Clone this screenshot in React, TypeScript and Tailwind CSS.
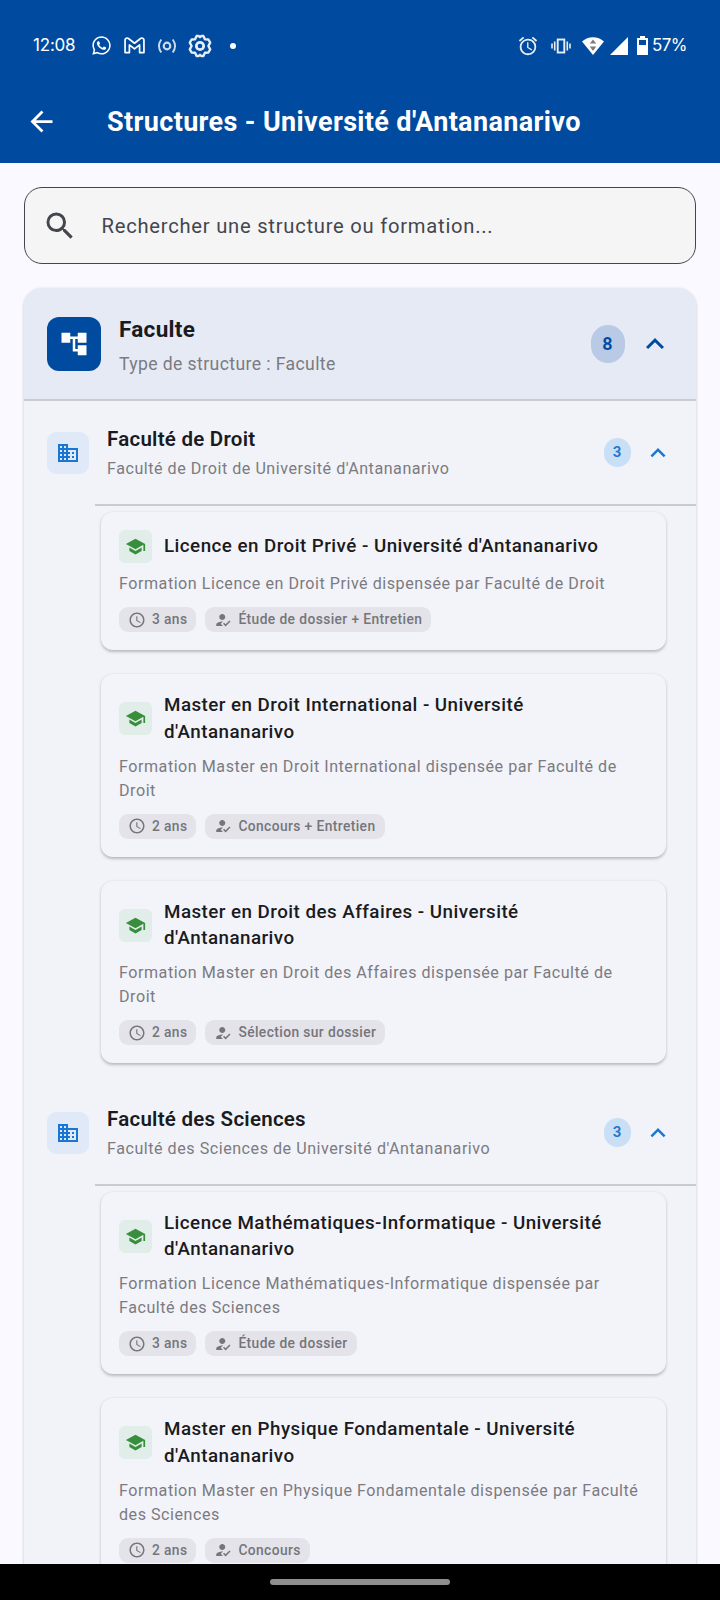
import {
  MdAccountTree,
  MdAlarm,
  MdArrowBack,
  MdBusiness,
  MdExpandLess,
  MdHowToReg,
  MdSchedule,
  MdSchool,
  MdSearch,
} from "react-icons/md";
import { FaWhatsapp } from "react-icons/fa";

type Formation = {
  title: string;
  description: string;
  duration: string;
  admission: string;
};

type Structure = {
  name: string;
  description: string;
  formations: Formation[];
};

const structures: Structure[] = [
  {
    name: "Faculté de Droit",
    description: "Faculté de Droit de Université d'Antananarivo",
    formations: [
      {
        title: "Licence en Droit Privé - Université d'Antananarivo",
        description:
          "Formation Licence en Droit Privé dispensée par Faculté de Droit",
        duration: "3 ans",
        admission: "Étude de dossier + Entretien",
      },
      {
        title: "Master en Droit International - Université d'Antananarivo",
        description:
          "Formation Master en Droit International dispensée par Faculté de Droit",
        duration: "2 ans",
        admission: "Concours + Entretien",
      },
      {
        title: "Master en Droit des Affaires - Université d'Antananarivo",
        description:
          "Formation Master en Droit des Affaires dispensée par Faculté de Droit",
        duration: "2 ans",
        admission: "Sélection sur dossier",
      },
    ],
  },
  {
    name: "Faculté des Sciences",
    description: "Faculté des Sciences de Université d'Antananarivo",
    formations: [
      {
        title: "Licence Mathématiques-Informatique - Université d'Antananarivo",
        description:
          "Formation Licence Mathématiques-Informatique dispensée par Faculté des Sciences",
        duration: "3 ans",
        admission: "Étude de dossier",
      },
      {
        title: "Master en Physique Fondamentale - Université d'Antananarivo",
        description:
          "Formation Master en Physique Fondamentale dispensée par Faculté des Sciences",
        duration: "2 ans",
        admission: "Concours",
      },
    ],
  },
];

function StatusBar() {
  return (
    <div className="flex h-[91px] items-center justify-between pl-[33px] pr-[33px] text-white font-['Inter',sans-serif]">
      <div className="flex items-center">
        <span className="w-[58px] text-[17px] tracking-[-0.2px]">12:08</span>
        <FaWhatsapp className="size-[21px]" />
        {/* Gmail */}
        <svg viewBox="0 0 22 18" className="ml-3 h-[17px] w-[21px]" fill="none" stroke="currentColor" strokeWidth="1.8" strokeLinejoin="round">
          <path d="M1 16.5V3.2C1 1.2 3.2.5 4.6 1.6L11 6.6l6.4-5C18.8.5 21 1.2 21 3.2v13.3h-4.6V8.4L11 12.6 5.6 8.4v8.1z" />
        </svg>
        {/* Hotspot */}
        <svg viewBox="0 0 20 16" className="ml-3 h-4 w-5 opacity-80" fill="none" stroke="currentColor" strokeWidth="1.9">
          <circle cx="10" cy="8" r="3.3" strokeWidth="2.2" />
          <path d="M4.3 1.5Q-.4 8 4.3 14.5M15.7 1.5Q20.4 8 15.7 14.5" />
        </svg>
        {/* Settings */}
        <svg viewBox="0 0 24 24" className="ml-[11px] size-6 opacity-90" fill="none" stroke="currentColor" strokeWidth="2.4" strokeLinejoin="round">
          <path d="M8.6 2h2.2L12 3.2 13.200 2h2.200l1.500 3.200 3.500.300 1.800 3.100L20.400 12l1.800 3.400-1.800 3.100-3.500.300L15.400 22h-2.200L12 20.800 10.800 22H8.600l-1.500-3.200-3.500-.300-1.800-3.100L3.600 12 1.800 8.600l1.800-3.100 3.500-.300z" />
          <circle cx="12" cy="12" r="3.7" strokeWidth="2.8" />
        </svg>
        <span className="ml-[18px] size-1.5 rounded-full bg-white" />
      </div>
      <div className="flex items-center">
        <MdAlarm className="size-[22px] opacity-90" />
        {/* Vibrate */}
        <svg viewBox="0 0 20 16" className="ml-3 h-4 w-5 opacity-90" fill="none" stroke="currentColor">
          <rect x="6.7" y="1.5" width="6.600" height="13" strokeWidth="1.900" />
          <path d="M3.700 3.500v9M16.300 3.500v9M1 5.500v5M19 5.500v5" strokeWidth="1.600" />
        </svg>
        <svg viewBox="0 0 22 18" className="ml-[11px] h-[18px] w-[22px]">
          <path fill="#fff" d="M0 4.500C6-1.200 16-1.200 22 4.500L11 18z" />
          <path fill="#7b7b7b" d="M11 2.500 14.200 6.500H7.800zM11 14 7.800 9.500h6.400z" />
        </svg>
        <svg viewBox="0 0 18 18" className="ml-[6px] size-[18px]">
          <path fill="#fff" d="M18 0v18H0z" />
        </svg>
        <svg viewBox="0 0 11 19" className="ml-[9px] h-[19px] w-[11px]">
          <path fill="#fff" fillRule="evenodd" d="M3 0h5v2h3v17H0V2h3zM2 4v5h7V4z" />
        </svg>
        <span className="ml-1 w-[35px] whitespace-nowrap text-[17px] tracking-[-0.6px]">57%</span>
      </div>
    </div>
  );
}

function AppBar() {
  return (
    <div className="flex h-[72px] items-center pb-[11px] pl-[25px] text-white">
      <MdArrowBack className="size-[33px] shrink-0" />
      <h1 className="ml-[49px] whitespace-nowrap text-[27px] font-bold leading-8 tracking-[0.36px]">
        Structures - Université d'Antananarivo
      </h1>
    </div>
  );
}

function SearchField() {
  return (
    <div className="mx-6 mt-6 flex h-[77px] items-center rounded-[18px] border-[1.5px] border-[#44464f] bg-[#f5f5f5] pl-[17px] text-[#44464f]">
      <MdSearch className="size-9" />
      <span className="ml-[23.5px] pt-0.5 text-[20.2px] tracking-[0.75px]">
        Rechercher une structure ou formation...
      </span>
    </div>
  );
}

function FormationCard({ formation }: { formation: Formation }) {
  return (
    <article className="rounded-xl bg-[#f3f3fa] p-[18px] shadow-[0_1.5px_3px_rgba(0,0,0,0.24)]">
      <div className="flex items-center gap-3">
        <div className="flex size-[33px] shrink-0 items-center justify-center rounded-md bg-[#e1ede8]">
          <MdSchool className="size-[21px] text-[#388e3c]" />
        </div>
        <h3 className="text-[18.8px] font-[550] leading-[26.6px] tracking-[0.46px] text-[#1a1b20]">
          {formation.title}
        </h3>
      </div>
      <p className="mt-[9.6px] text-[16.1px] leading-[23.7px] tracking-[0.53px] text-[#7b7b80]">
        {formation.description}
      </p>
      <div className="mt-[11.3px] flex gap-[9px] text-[#75757a]">
        <span className="flex h-[25px] items-center gap-1.5 rounded-[9px] bg-[#e4e3e9] px-[9px] text-[13.8px] font-medium tracking-[0.38px]">
          <MdSchedule className="size-[18px]" />
          {formation.duration}
        </span>
        <span className="flex h-[25px] items-center gap-1.5 rounded-[9px] bg-[#e4e3e9] px-[9px] text-[13.8px] font-medium tracking-[0.4px]">
          <MdHowToReg className="size-[18px]" />
          {formation.admission}
        </span>
      </div>
    </article>
  );
}

function StructureSection({ structure }: { structure: Structure }) {
  return (
    <section>
      <div className="flex h-[103px] items-center pl-[23px] pr-[23.5px]">
        <div className="flex size-[42px] items-center justify-center rounded-[9px] bg-[#dfe9f8]">
          <MdBusiness className="size-6 text-[#1976d2]" />
        </div>
        <div className="ml-[18px] flex-1 pt-px">
          <h2 className="text-[20.5px] font-semibold leading-[30px] tracking-[0.25px] text-[#1a1b20]">
            {structure.name}
          </h2>
          <p className="mt-px text-[16.1px] leading-7 tracking-[0.53px] text-[#7b7b80]">
            {structure.description}
          </p>
        </div>
        <span className="flex h-[29px] w-[27px] items-center justify-center rounded-full bg-[#c9dff6] text-[15px] font-semibold text-[#1976d2]">
          3
        </span>
        <MdExpandLess className="ml-3 size-[30px] text-[#1976d2]" />
      </div>
      <div className="ml-[71px] h-[2px] bg-[#c9cad2]" />
      <div className="flex flex-col gap-6 pb-[18px] pl-[77px] pr-[30px] pt-[5.5px]">
        {structure.formations.map((formation) => (
          <FormationCard key={formation.title} formation={formation} />
        ))}
      </div>
    </section>
  );
}

function App() {
  return (
    <div className="flex h-[1600px] w-[720px] flex-col overflow-hidden bg-[#faf9ff] font-['Roboto',sans-serif]">
      <header className="h-[163px] shrink-0 bg-[#004ba0]">
        <StatusBar />
        <AppBar />
      </header>
      <main className="min-h-0 flex-1 overflow-hidden">
        <SearchField />
        <div className="mx-6 mt-6 overflow-hidden rounded-[18px] bg-[#f2f3f9] shadow-[0_1.5px_3px_rgba(0,0,0,0.24)]">
          <div className="flex h-[111px] items-center bg-[#e6eaf5] pl-[23px] pr-[23.5px]">
            <div className="flex size-[54px] items-center justify-center rounded-xl bg-[#004ba0]">
              <MdAccountTree className="size-[30px] text-white" />
            </div>
            <div className="ml-[18px] flex-1 pt-[3px]">
              <h2 className="text-[22.5px] font-bold leading-8 tracking-[0.3px] text-[#1a1b20]">
                Faculte
              </h2>
              <p className="mt-1.5 text-[17.6px] leading-[27px] tracking-[0.4px] text-[#7b7b80]">
                Type de structure : Faculte
              </p>
            </div>
            <span className="flex h-[38px] w-[34px] items-center justify-center rounded-full bg-[#b8cae5] text-[18px] font-semibold text-[#004ba0]">
              8
            </span>
            <MdExpandLess className="ml-3 size-9 text-[#004ba0]" />
          </div>
          <div className="h-[2px] bg-[#c9cad2]" />
          {structures.map((structure) => (
            <StructureSection key={structure.name} structure={structure} />
          ))}
        </div>
      </main>
      <footer className="flex h-9 shrink-0 items-center justify-center bg-black">
        <div className="h-1.5 w-[180px] rounded-full bg-[#8f8f8f]" />
      </footer>
    </div>
  );
}

export default App;
